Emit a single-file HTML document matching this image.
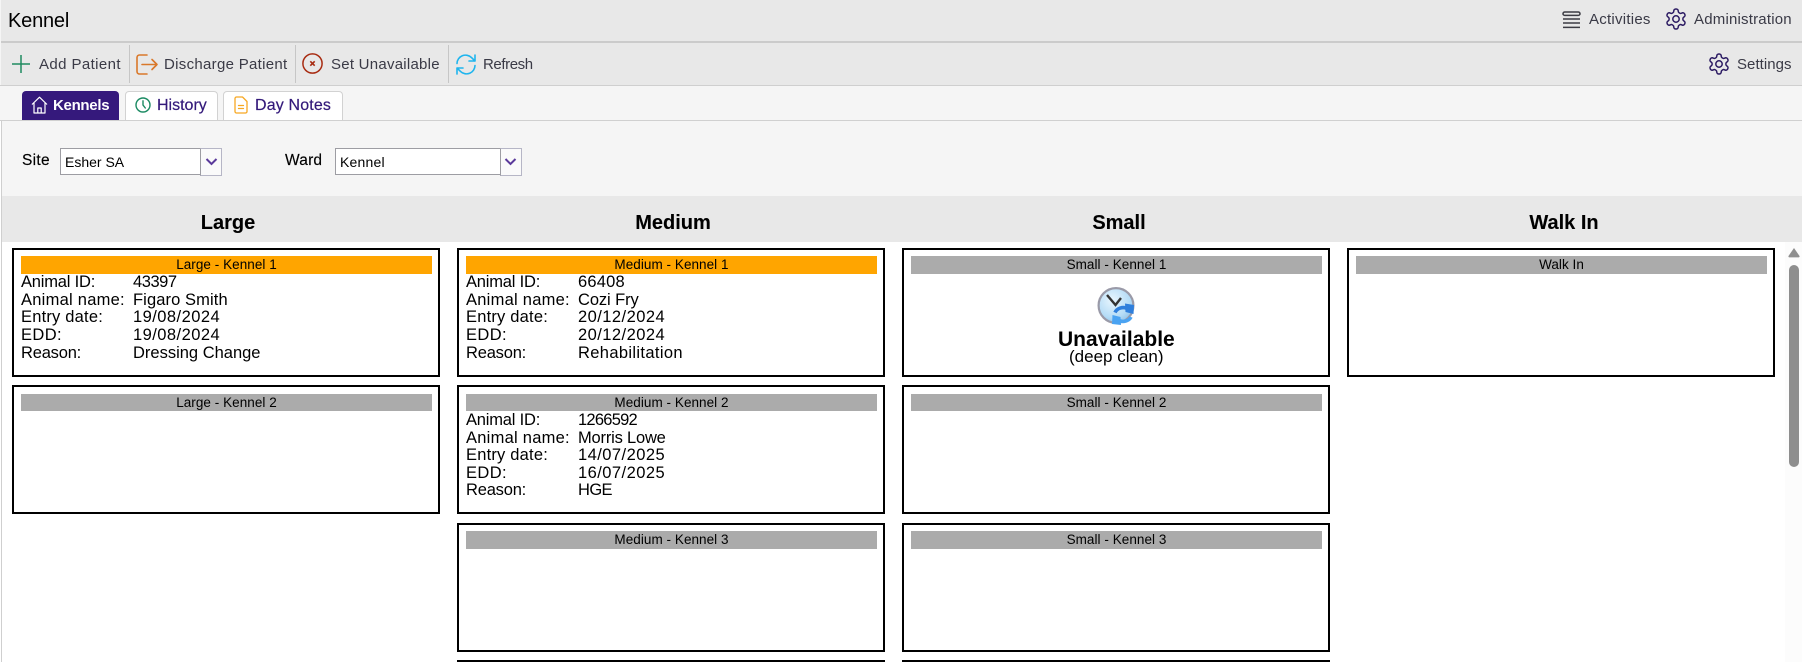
<!DOCTYPE html>
<html><head><meta charset="utf-8"><title>Kennel</title>
<style>
html,body{margin:0;padding:0;width:1802px;height:662px;overflow:hidden;background:#fff;font-family:"Liberation Sans",sans-serif;color:#000}
#r{position:relative;width:1802px;height:662px;overflow:hidden}
.b{position:absolute;box-sizing:border-box}
.t{position:absolute;white-space:nowrap;line-height:20px;height:20px}
.tb{font-size:15px;color:#3a3a46}
.tab{position:absolute;top:91px;height:29px;box-sizing:border-box;background:#fff;border:1px solid #d2d2d2;border-bottom:0;border-radius:4px 4px 0 0}
.tl{font-size:16px;color:#33197a;-webkit-text-stroke:.2px}
.card{position:absolute;box-sizing:border-box;width:428px;border:2px solid #000;background:#fff}
.bar{position:absolute;box-sizing:border-box;width:411px;height:18px;background:#ababab;font-size:13.5px;letter-spacing:.05px;line-height:18px;text-align:center;color:#000}
.or{background:#ffa500}
.h{position:absolute;top:213px;height:20px;line-height:20px;font-size:20px;font-weight:bold;width:300px;text-align:center;-webkit-text-stroke:.1px}
.f{font-size:16.5px;letter-spacing:.2px}
.aid{letter-spacing:-.2px}.anm{letter-spacing:.25px}.ent{letter-spacing:.2px}.edd{letter-spacing:.4px}.rsn{letter-spacing:-.2px}
.dt{letter-spacing:.45px}
.sel{font-size:14px}
svg{position:absolute;overflow:visible}
</style></head><body><div id="r">

<!-- top bands -->
<div class="b" style="left:0;top:0;width:1802px;height:41px;background:#e8e8e8"></div>
<div class="b" style="left:0;top:41px;width:1802px;height:2px;background:#cbcbcb"></div>
<div class="b" style="left:0;top:43px;width:1802px;height:42px;background:#e8e8e8"></div>
<div class="b" style="left:0;top:85px;width:1802px;height:1px;background:#cfcfcf"></div>
<div class="b" style="left:0;top:86px;width:1802px;height:35px;background:#f5f5f5"></div>
<div class="b" style="left:0;top:0;width:1px;height:85px;background:#f5f5f5"></div>

<div class="t" style="left:8px;top:11px;font-size:20px;letter-spacing:-.2px">Kennel</div>

<!-- top right -->
<svg style="left:1562px;top:11px" width="20" height="18" viewBox="0 0 20 18" fill="none" stroke="#3c3c44" stroke-width="1.5"><rect x="1" y="1" width="17" height="3.4" rx="1.7"/><path d="M1 8h17M1 12h17M1 16.4h17"/></svg>
<div class="t tb" style="left:1589px;top:10px;letter-spacing:.25px">Activities</div>
<svg style="left:1664px;top:7px" width="24" height="24" viewBox="0 0 24 24" fill="none" stroke="#2b1a62" stroke-width="1.5"><path d="M12.22 2h-.44a2 2 0 0 0-2 2v.18a2 2 0 0 1-1 1.73l-.43.25a2 2 0 0 1-2 0l-.15-.08a2 2 0 0 0-2.73.73l-.22.38a2 2 0 0 0 .73 2.73l.15.1a2 2 0 0 1 1 1.72v.51a2 2 0 0 1-1 1.74l-.15.09a2 2 0 0 0-.73 2.73l.22.38a2 2 0 0 0 2.73.73l.15-.08a2 2 0 0 1 2 0l.43.25a2 2 0 0 1 1 1.73V20a2 2 0 0 0 2 2h.44a2 2 0 0 0 2-2v-.18a2 2 0 0 1 1-1.73l.43-.25a2 2 0 0 1 2 0l.15.08a2 2 0 0 0 2.73-.73l.22-.39a2 2 0 0 0-.73-2.73l-.15-.08a2 2 0 0 1-1-1.74v-.5a2 2 0 0 1 1-1.74l.15-.09a2 2 0 0 0 .73-2.73l-.22-.38a2 2 0 0 0-2.73-.73l-.15.08a2 2 0 0 1-2 0l-.43-.25a2 2 0 0 1-1-1.73V4a2 2 0 0 0-2-2z"/><circle cx="12" cy="12" r="3.2"/></svg>
<div class="t tb" style="left:1694px;top:10px;letter-spacing:.2px">Administration</div>
<svg style="left:1707px;top:52px" width="24" height="24" viewBox="0 0 24 24" fill="none" stroke="#2b1a62" stroke-width="1.5"><path d="M12.22 2h-.44a2 2 0 0 0-2 2v.18a2 2 0 0 1-1 1.73l-.43.25a2 2 0 0 1-2 0l-.15-.08a2 2 0 0 0-2.73.73l-.22.38a2 2 0 0 0 .73 2.73l.15.1a2 2 0 0 1 1 1.72v.51a2 2 0 0 1-1 1.74l-.15.09a2 2 0 0 0-.73 2.73l.22.38a2 2 0 0 0 2.73.73l.15-.08a2 2 0 0 1 2 0l.43.25a2 2 0 0 1 1 1.73V20a2 2 0 0 0 2 2h.44a2 2 0 0 0 2-2v-.18a2 2 0 0 1 1-1.73l.43-.25a2 2 0 0 1 2 0l.15.08a2 2 0 0 0 2.73-.73l.22-.39a2 2 0 0 0-.73-2.73l-.15-.08a2 2 0 0 1-1-1.74v-.5a2 2 0 0 1 1-1.74l.15-.09a2 2 0 0 0 .73-2.73l-.22-.38a2 2 0 0 0-2.73-.73l-.15.08a2 2 0 0 1-2 0l-.43-.25a2 2 0 0 1-1-1.73V4a2 2 0 0 0-2-2z"/><circle cx="12" cy="12" r="3.2"/></svg>
<div class="t tb" style="left:1737px;top:55px;letter-spacing:.05px">Settings</div>

<!-- toolbar -->
<svg style="left:12px;top:55px" width="18" height="18" viewBox="0 0 18 18" fill="none" stroke="#1f8a60" stroke-width="1.5"><path d="M9 0v18M0 9h18"/></svg>
<div class="t tb" style="left:39px;top:55px;letter-spacing:.4px">Add Patient</div>
<div class="b" style="left:129px;top:45px;width:1px;height:38px;background:#c6c6c6"></div>
<svg style="left:136px;top:54px" width="22" height="21" viewBox="0 0 22 21" fill="none" stroke="#d9782a" stroke-width="1.6" stroke-linecap="round" stroke-linejoin="round"><path d="M11 1H3.500A2.500 2.500 0 0 0 1 3.500v14A2.500 2.500 0 0 0 3.500 20H11"/><path d="M6 10.500h15M16 5.500l5 5-5 5"/></svg>
<div class="t tb" style="left:164px;top:55px;letter-spacing:.3px">Discharge Patient</div>
<div class="b" style="left:295px;top:45px;width:1px;height:38px;background:#c6c6c6"></div>
<svg style="left:302px;top:53px" width="21" height="21" viewBox="0 0 21 21" fill="none" stroke="#a82c12" stroke-width="1.5"><circle cx="10.500" cy="10.500" r="9.600"/><path d="M8.300 8.300l4.400 4.400M12.700 8.300l-4.400 4.400" stroke-width="1.600"/></svg>
<div class="t tb" style="left:331px;top:55px;letter-spacing:.25px">Set Unavailable</div>
<div class="b" style="left:448px;top:45px;width:1px;height:38px;background:#c6c6c6"></div>
<svg style="left:456px;top:54px" width="20" height="21" viewBox="0 0 20 21" fill="none" stroke="#1fb5ee" stroke-width="1.6" stroke-linecap="round" stroke-linejoin="round"><path d="M1 9.500A8.500 8.500 0 0 1 15.500 3.600L19 7M19 1v6h-6"/><path d="M19 11.500A8.500 8.500 0 0 1 4.500 17.400L1 14M1 20v-6h6"/></svg>
<div class="t tb" style="left:483px;top:55px;letter-spacing:-.4px">Refresh</div>

<!-- tabs -->
<div class="b" style="left:22px;top:91px;width:97px;height:29px;background:#35197c;border-radius:4px 4px 0 0"></div>
<svg style="left:31px;top:96px" width="17" height="18" viewBox="0 0 17 18" fill="none" stroke="#fff" stroke-width="1.2" stroke-linejoin="round"><path d="M1 8.500L8.500 1.200 16 8.500M3 7v10h11V7"/><path d="M6.800 17v-5h3.400v5"/></svg>
<div class="t" style="left:53px;top:96px;font-size:15px;color:#fff;font-weight:bold;letter-spacing:-.3px">Kennels</div>

<div class="tab" style="left:125px;width:93px"></div>
<svg style="left:135px;top:97px" width="16" height="16" viewBox="0 0 16 16" fill="none" stroke="#1a8a62" stroke-width="1.400"><circle cx="8" cy="8" r="7"/><path d="M8 3.800V8l2.300 3" stroke-linecap="round"/></svg>
<div class="t tl" style="left:157px;top:96px">History</div>

<div class="tab" style="left:223px;width:120px"></div>
<svg style="left:234px;top:96px" width="14" height="18" viewBox="0 0 14 18" fill="none" stroke="#f7a823" stroke-width="1.300" stroke-linejoin="round" stroke-linecap="round"><path d="M8.500 1H2.500A1.500 1.500 0 0 0 1 2.500v13A1.500 1.500 0 0 0 2.500 17h9a1.500 1.500 0 0 0 1.500-1.500V5.500z"/><path d="M4.500 9.500h5M4.500 12.500h5"/></svg>
<div class="t tl" style="left:255px;top:96px;letter-spacing:.15px">Day Notes</div>

<div class="b" style="left:0;top:120px;width:1802px;height:1px;background:#d0d0d0"></div>

<!-- filter panel -->
<div class="b" style="left:2px;top:121px;width:1800px;height:75px;background:#f5f5f5"></div>
<div class="b" style="left:1px;top:121px;width:1px;height:541px;background:#cfcfcf"></div>
<div class="t" style="left:22px;top:151px;font-size:15.5px;letter-spacing:.3px;-webkit-text-stroke:.15px">Site</div>
<div class="b" style="left:60px;top:148px;width:141px;height:27px;background:#fff;border:1px solid #9d9da3"></div>
<div class="t sel" style="left:65px;top:152px">Esher SA</div>
<div class="b" style="left:200px;top:148px;width:22px;height:28px;background:#fafafa;border:1px solid #b6b6c6;border-left:1px solid #9d9da3"></div>
<svg style="left:205px;top:158px" width="13" height="8" viewBox="0 0 13 8" fill="none" stroke="#5b3a9b" stroke-width="2"><path d="M1.500 1l5 5 5-5"/></svg>

<div class="t" style="left:285px;top:151px;font-size:15.5px;letter-spacing:.2px;-webkit-text-stroke:.15px">Ward</div>
<div class="b" style="left:335px;top:148px;width:166px;height:27px;background:#fff;border:1px solid #9d9da3"></div>
<div class="t sel" style="left:340px;top:152px;letter-spacing:.2px">Kennel</div>
<div class="b" style="left:500px;top:148px;width:22px;height:28px;background:#fafafa;border:1px solid #b6b6c6;border-left:1px solid #9d9da3"></div>
<svg style="left:504px;top:158px" width="13" height="8" viewBox="0 0 13 8" fill="none" stroke="#5b3a9b" stroke-width="2"><path d="M1.500 1l5 5 5-5"/></svg>

<!-- column headers -->
<div class="b" style="left:2px;top:196px;width:1800px;height:46px;background:#e8e8e8"></div>
<div class="h" style="left:78px">Large</div>
<div class="h" style="left:523px">Medium</div>
<div class="h" style="left:969px">Small</div>
<div class="h" style="left:1414px">Walk In</div>

<!-- scrollbar -->
<div class="b" style="left:1785px;top:242px;width:17px;height:420px;background:#fcfcfc"></div>
<svg style="left:1788px;top:247px" width="12" height="11" viewBox="0 0 12 11"><path d="M6 1L11.500 9a1 1 0 0 1-.8 1.400H1.300A1 1 0 0 1 .5 9z" fill="#8f8f8f"/></svg>
<div class="b" style="left:1789px;top:265px;width:10px;height:202px;background:#8e8e8e;border-radius:5px"></div>

<!-- LARGE -->
<div class="card" style="left:12px;top:248px;height:129px"></div>
<div class="bar or" style="left:21px;top:256px">Large - Kennel 1</div>
<div class="t f aid" style="left:21px;top:272px">Animal ID:</div><div class="t f" style="left:133px;top:272px;letter-spacing:-.45px">43397</div>
<div class="t f anm" style="left:21px;top:290px">Animal name:</div><div class="t f" style="left:133px;top:290px;letter-spacing:.1px">Figaro Smith</div>
<div class="t f ent" style="left:21px;top:307px">Entry date:</div><div class="t f dt" style="left:133px;top:307px">19/08/2024</div>
<div class="t f edd" style="left:21px;top:325px">EDD:</div><div class="t f dt" style="left:133px;top:325px">19/08/2024</div>
<div class="t f rsn" style="left:21px;top:343px">Reason:</div><div class="t f" style="left:133px;top:343px;letter-spacing:0">Dressing Change</div>

<div class="card" style="left:12px;top:385px;height:129px"></div>
<div class="bar" style="left:21px;top:394px;height:17px;line-height:17px">Large - Kennel 2</div>

<!-- MEDIUM -->
<div class="card" style="left:457px;top:248px;height:129px"></div>
<div class="bar or" style="left:466px;top:256px">Medium - Kennel 1</div>
<div class="t f aid" style="left:466px;top:272px">Animal ID:</div><div class="t f" style="left:578px;top:272px;letter-spacing:.2px">66408</div>
<div class="t f anm" style="left:466px;top:290px">Animal name:</div><div class="t f" style="left:578px;top:290px;letter-spacing:-.1px">Cozi Fry</div>
<div class="t f ent" style="left:466px;top:307px">Entry date:</div><div class="t f dt" style="left:578px;top:307px">20/12/2024</div>
<div class="t f edd" style="left:466px;top:325px">EDD:</div><div class="t f dt" style="left:578px;top:325px">20/12/2024</div>
<div class="t f rsn" style="left:466px;top:343px">Reason:</div><div class="t f" style="left:578px;top:343px;letter-spacing:.35px">Rehabilitation</div>

<div class="card" style="left:457px;top:385px;height:129px"></div>
<div class="bar" style="left:466px;top:394px;height:17px;line-height:17px">Medium - Kennel 2</div>
<div class="t f aid" style="left:466px;top:410px">Animal ID:</div><div class="t f" style="left:578px;top:410px;letter-spacing:-.75px">1266592</div>
<div class="t f anm" style="left:466px;top:428px">Animal name:</div><div class="t f" style="left:578px;top:428px;letter-spacing:-.2px">Morris Lowe</div>
<div class="t f ent" style="left:466px;top:445px">Entry date:</div><div class="t f dt" style="left:578px;top:445px">14/07/2025</div>
<div class="t f edd" style="left:466px;top:463px">EDD:</div><div class="t f dt" style="left:578px;top:463px">16/07/2025</div>
<div class="t f rsn" style="left:466px;top:480px">Reason:</div><div class="t f" style="left:578px;top:480px;letter-spacing:-.6px">HGE</div>

<div class="card" style="left:457px;top:523px;height:129px"></div>
<div class="bar" style="left:466px;top:531px">Medium - Kennel 3</div>
<div class="b" style="left:457px;top:660px;width:428px;height:2px;background:#000"></div>

<!-- SMALL -->
<div class="card" style="left:902px;top:248px;height:129px"></div>
<div class="bar" style="left:911px;top:256px">Small - Kennel 1</div>
<svg style="left:1097px;top:287px" width="38" height="38" viewBox="0 0 38 38">
<defs><radialGradient id="cg" cx=".4" cy=".35" r=".7"><stop offset="0" stop-color="#e9f6fe"/><stop offset=".7" stop-color="#b5dcf6"/><stop offset="1" stop-color="#8fc2e8"/></radialGradient></defs>
<circle cx="19" cy="18.500" r="17.400" fill="url(#cg)" stroke="#9a9aa8" stroke-width="2.200"/>
<path d="M10 8l8.500 10L24 11" fill="none" stroke="#333" stroke-width="2.400"/>
<path d="M18 25.500C20 21 26 19.500 30 21.500" fill="none" stroke="#2f7fdc" stroke-width="3.600"/>
<path d="M28 16.500L37 18l-.5 9-8-2z" fill="#2f7fdc"/>
<path d="M34 30C32 34 26 35.500 22 33.500" fill="none" stroke="#4aa3f2" stroke-width="3.600"/>
<path d="M24 38L15 37l.5-9 8 2z" fill="#4aa3f2"/>
</svg>
<div class="t" style="left:1058px;top:330px;font-size:21px;font-weight:bold">Unavailable</div>
<div class="t" style="left:1069px;top:347px;font-size:17px">(deep clean)</div>

<div class="card" style="left:902px;top:385px;height:129px"></div>
<div class="bar" style="left:911px;top:394px;height:17px;line-height:17px">Small - Kennel 2</div>

<div class="card" style="left:902px;top:523px;height:129px"></div>
<div class="bar" style="left:911px;top:531px">Small - Kennel 3</div>
<div class="b" style="left:902px;top:660px;width:428px;height:2px;background:#000"></div>

<!-- WALK IN -->
<div class="card" style="left:1347px;top:248px;height:129px"></div>
<div class="bar" style="left:1356px;top:256px">Walk In</div>

</div></body></html>
